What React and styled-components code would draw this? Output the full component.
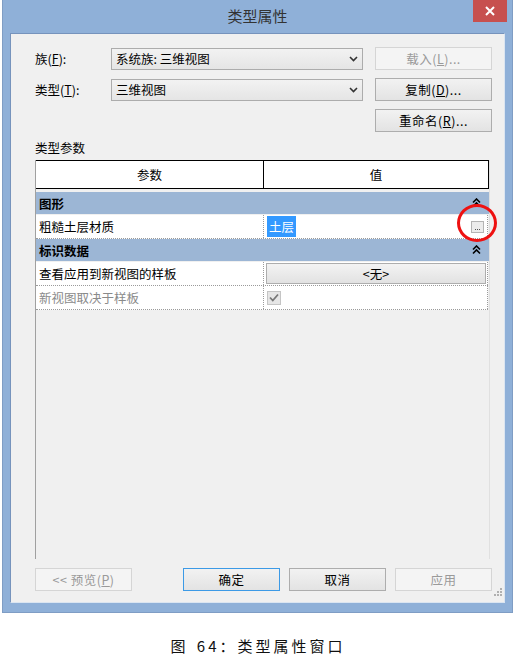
import styled, { createGlobalStyle } from "styled-components";

const Global = createGlobalStyle`
  html, body { margin: 0; padding: 0; background: #ffffff; }
  body { font-family: "Noto Sans CJK SC", "Liberation Sans", sans-serif; }
`;

const Page = styled.div`
  width: 516px;
  height: 659px;
  display: flex;
  flex-direction: column;
  background: #fff;
`;

const Window = styled.div`
  margin-left: 2px;
  width: 511px;
  height: 613px;
  box-sizing: border-box;
  background: #8fb0d8;
  border: 1px solid #7f9dc4;
  border-top: none;
  display: flex;
  flex-direction: column;
  padding: 0 7px 9px 7px;
`;

const TitleBar = styled.div`
  height: 33px;
  display: flex;
  align-items: flex-start;
  position: relative;
`;

const Title = styled.div`
  flex: 1;
  text-align: center;
  font-size: 15px;
  color: #333;
  line-height: 32px;
`;

const Close = styled.div`
  position: absolute;
  right: -2px;
  top: 0;
  width: 34px;
  height: 22px;
  background: #c7504f;
  display: flex;
  align-items: center;
  justify-content: center;
`;

const Client = styled.div`
  flex: 1;
  background: #f0f0f0;
  border: 1px solid #6f8cb4;
  border-color: #7693bc #dbe5f1 #dbe5f1 #7693bc;
  display: flex;
  flex-direction: column;
  padding: 13px 12px 0 24px;
  position: relative;
  font-size: 12.5px;
  color: #000;
`;

const Row = styled.div`
  display: flex;
  align-items: center;
  height: 23px;
  margin-bottom: ${(p) => p.$mb || 8}px;
`;

const Label = styled.div`
  width: 76px;
  u { text-decoration: underline; }
`;

const Combo = styled.div`
  width: 246px;
  height: 20px;
  border: 1px solid #acacac;
  background: linear-gradient(#f2f2f2, #e5e5e5);
  display: flex;
  align-items: center;
  padding-left: 4px;
  box-sizing: content-box;
`;

const ComboText = styled.div`
  flex: 1;
`;

const Arrow = styled.div`
  width: 18px;
  display: flex;
  justify-content: center;
`;

const Spacer = styled.div`
  flex: 1;
`;

const Button = styled.div`
  width: ${(p) => p.$w || 117}px;
  height: 23px;
  box-sizing: border-box;
  border: 1px solid ${(p) => (p.$focus ? "#3c9ae6" : p.$disabled ? "#d5d5d5" : "#adadad")};
  background: ${(p) => (p.$disabled ? "#f4f4f4" : "linear-gradient(#f2f2f2, #e3e3e3)")};
  color: ${(p) => (p.$disabled ? "#9a9a9a" : "#000")};
  margin-left: ${(p) => p.$ml || 0}px;
  display: flex;
  align-items: center;
  justify-content: center;
  font-size: 12.5px;
  letter-spacing: 0.5px;
`;

const SectionLabel = styled.div`
  margin-top: 4px;
  height: 20px;
  line-height: 20px;
`;

const Table = styled.div`
  margin-top: 2px;
  width: 455px;
  height: 399px;
  box-sizing: border-box;
  border-left: 1px solid #a0a0a0;
  border-right: 1px solid #e0e0e0;
  background: #f0f0f0;
  display: flex;
  flex-direction: column;
`;

const Header = styled.div`
  display: grid;
  grid-template-columns: 227px 1fr;
  height: 27px;
  border: 1px solid #000;
  border-left: none;
  background: #fff;
`;

const HeadCell = styled.div`
  display: flex;
  align-items: center;
  justify-content: center;
  border-left: ${(p) => (p.$first ? "none" : "1px solid #000")};
`;

const Body = styled.div`
  margin-top: 3px;
  display: flex;
  flex-direction: column;
`;

const Group = styled.div`
  height: 22px;
  background: #9cb6d5;
  display: flex;
  align-items: center;
  padding-left: 3px;
  padding-right: 8px;
  font-weight: bold;
  margin-bottom: 1px;
`;

const ParamRow = styled.div`
  display: grid;
  grid-template-columns: 227px 1fr;
  height: 23px;
  background: #fff;
  border-bottom: 1px dotted #9a9a9a;
  margin-right: 1px;
`;

const Cell = styled.div`
  display: flex;
  align-items: center;
  padding-left: ${(p) => (p.$value ? 2 : 3)}px;
  color: ${(p) => (p.$muted ? "#8a8a8a" : "#000")};
  border-left: ${(p) => (p.$value ? "1px dotted #9a9a9a" : "none")};
  border-right: ${(p) => (p.$value ? "1px dotted #9a9a9a" : "none")};
  position: relative;
`;

const Selected = styled.span`
  background: #3399ff;
  color: #fff;
  padding: 1px 2px;
  margin-left: 1px;
`;

const Ellipsis = styled.div`
  margin-left: auto;
  margin-right: 3px;
  width: 13px;
  height: 12px;
  box-sizing: border-box;
  border: 1px solid #b4b4b4;
  background: #ececec;
  display: flex;
  align-items: flex-end;
  justify-content: center;
  gap: 1px;
  padding-bottom: 2px;
`;

const Dot = styled.span`
  width: 1px;
  height: 1px;
  background: #555;
`;

const Ring = styled.div`
  position: absolute;
  right: -10px;
  top: -11px;
  width: 40px;
  height: 38px;
  border: 3px solid #ee1111;
  border-radius: 50%;
  box-sizing: border-box;
  pointer-events: none;
`;

const ValueButton = styled.div`
  flex: 1;
  height: 21px;
  margin-right: 1px;
  box-sizing: border-box;
  border: 1px solid #adadad;
  background: linear-gradient(#f3f3f3, #e2e2e2);
  display: flex;
  align-items: center;
  justify-content: center;
`;

const Check = styled.div`
  width: 14px;
  height: 14px;
  margin-left: 1px;
  box-sizing: border-box;
  border: 1px solid #c5c5c5;
  background: #e6e6e6;
  display: flex;
  align-items: center;
  justify-content: center;
`;

const Footer = styled.div`
  display: flex;
  align-items: center;
  margin-top: 9px;
`;

const Grip = styled.div`
  position: absolute;
  right: 2px;
  bottom: 2px;
`;

const Caption = styled.div`
  margin-top: 22px;
  text-align: center;
  font-family: "Noto Sans CJK SC", sans-serif;
  font-size: 15px;
  color: #111;
  letter-spacing: 3px;
  word-spacing: 2px;
`;

const Collapse = () => (
  <svg width="9" height="10" viewBox="0 0 9 10" style={{ marginLeft: "auto" }}>
    <path d="M1 4.5 L4.5 1 L8 4.5 M1 8.5 L4.5 5 L8 8.5" stroke="#000" strokeWidth="1.6" fill="none" />
  </svg>
);

const Chevron = () => (
  <svg width="9" height="6" viewBox="0 0 9 6">
    <path d="M1 1 L4.5 4.5 L8 1" stroke="#333" strokeWidth="1.6" fill="none" />
  </svg>
);

export default function App() {
  return (
    <Page>
      <Global />
      <Window>
        <TitleBar>
          <Title>类型属性</Title>
          <Close>
            <svg width="10" height="10" viewBox="0 0 10 10">
              <path d="M1 1 L9 9 M9 1 L1 9" stroke="#fff" strokeWidth="2" />
            </svg>
          </Close>
        </TitleBar>
        <Client>
          <Row>
            <Label>族(<u>F</u>):</Label>
            <Combo>
              <ComboText>系统族: 三维视图</ComboText>
              <Arrow><Chevron /></Arrow>
            </Combo>
            <Spacer />
            <Button $disabled>载入(<u>L</u>)...</Button>
          </Row>
          <Row>
            <Label>类型(<u>T</u>):</Label>
            <Combo>
              <ComboText>三维视图</ComboText>
              <Arrow><Chevron /></Arrow>
            </Combo>
            <Spacer />
            <Button>复制(<u>D</u>)...</Button>
          </Row>
          <Row $mb={2}>
            <Spacer />
            <Button>重命名(<u>R</u>)...</Button>
          </Row>
          <SectionLabel>类型参数</SectionLabel>
          <Table>
            <Header>
              <HeadCell $first>参数</HeadCell>
              <HeadCell>值</HeadCell>
            </Header>
            <Body>
              <Group>图形<Collapse /></Group>
              <ParamRow>
                <Cell>粗糙土层材质</Cell>
                <Cell $value>
                  <Selected>土层</Selected>
                  <Ellipsis><Dot /><Dot /><Dot /></Ellipsis>
                  <Ring />
                </Cell>
              </ParamRow>
              <Group>标识数据<Collapse /></Group>
              <ParamRow>
                <Cell>查看应用到新视图的样板</Cell>
                <Cell $value>
                  <ValueButton>&lt;无&gt;</ValueButton>
                </Cell>
              </ParamRow>
              <ParamRow>
                <Cell $muted>新视图取决于样板</Cell>
                <Cell $value>
                  <Check>
                    <svg width="10" height="9" viewBox="0 0 10 9">
                      <path d="M1 4.5 L3.8 7.5 L9 1.5" stroke="#777" strokeWidth="1.8" fill="none" />
                    </svg>
                  </Check>
                </Cell>
              </ParamRow>
            </Body>
          </Table>
          <Footer>
            <Button $w={97} $disabled>&lt;&lt; 预览(<u>P</u>)</Button>
            <Spacer />
            <Button $w={97} $focus>确定</Button>
            <Button $w={97} $ml={9}>取消</Button>
            <Button $w={97} $ml={9} $disabled>应用</Button>
          </Footer>
          <Grip>
            <svg width="8" height="8" viewBox="0 0 8 8" fill="#b0b0b0">
              <rect x="6" y="0" width="2" height="2" />
              <rect x="3" y="3" width="2" height="2" />
              <rect x="6" y="3" width="2" height="2" />
              <rect x="0" y="6" width="2" height="2" />
              <rect x="3" y="6" width="2" height="2" />
              <rect x="6" y="6" width="2" height="2" />
            </svg>
          </Grip>
        </Client>
      </Window>
      <Caption>图 64：类型属性窗口</Caption>
    </Page>
  );
}
